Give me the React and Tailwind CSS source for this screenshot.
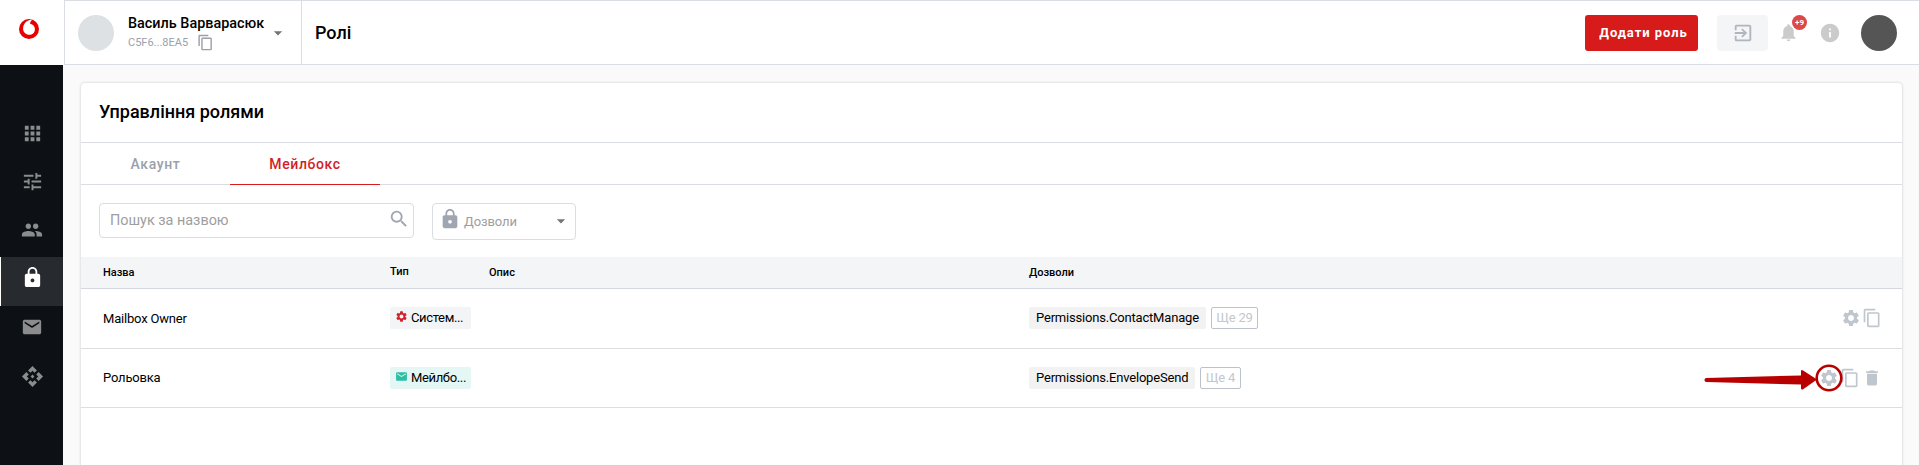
import {
  MdApps, MdTune, MdPeople, MdLock, MdEmail, MdApi, MdContentCopy, MdArrowDropDown,
  MdExitToApp, MdNotifications, MdInfo, MdSearch, MdSettings, MdDelete,
} from "react-icons/md";

const NAV = [
  { icon: MdApps, size: 23, pad: "pt-[12px]" },
  { icon: MdTune, size: 23, pad: "pt-[11px]" },
  { icon: MdPeople, size: 22, pad: "pt-[11px]" },
  { icon: MdLock, size: 23, active: true },
  { icon: MdEmail, size: 22, pad: "pt-[10px]" },
  { icon: MdApi, size: 23, pad: "pt-[10px]" },
];

const ROWS = [
  { name: "Mailbox Owner", type: "Систем...", system: true, permission: "Permissions.ContactManage", more: "Ще 29" },
  { name: "Рольовка", type: "Мейлбо...", system: false, permission: "Permissions.EnvelopeSend", more: "Ще 4" },
];

const GRID = "grid grid-cols-[287px_99px_540px_1fr] pl-[22px]";

function Logo() {
  return (
    <svg className="h-5 w-5" viewBox="0 0 20 20">
      <circle cx="10" cy="10" r="10" fill="#e60000" />
      <path fill="#fff" d="M10.1 15.8c-3 0-6-2.400-6-6.300C4.100 6.700 5.600 4.100 7.500 2.600 9.300 1.200 11.800.5 14 .5c.1 0 .2 0 .3.1-1.900.4-3.200 2.200-3.200 4v.2c3.200.8 4.800 2.700 4.800 5.600 0 2.900-2.200 5.400-5.800 5.400z" />
    </svg>
  );
}

function Sidebar() {
  return (
    <aside className="flex h-[465px] w-[63px] shrink-0 flex-col bg-[#0d1015]">
      <div className="flex h-[65px] shrink-0 justify-center bg-white pr-[5px] pt-[19px]">
        <Logo />
      </div>
      <nav className="flex flex-col pt-[45px]">
        {NAV.map(({ icon: Icon, size, active, pad }, i) => (
          <div
            key={i}
            className={
              active
                ? "flex h-[49px] justify-center border-l border-white bg-[#272a2e] pt-[9px] text-white"
                : `flex h-[49px] justify-center border-l border-transparent text-[#8b8c8d] ${pad}`
            }
          >
            <Icon size={size} />
          </div>
        ))}
      </nav>
    </aside>
  );
}

function Header() {
  return (
    <header className="ml-px flex h-[65px] shrink-0 items-center border-y border-l border-[#dadde1] bg-white">
      <div className="flex h-full w-[237px] items-center border-r border-[#dadde1] pl-[13px]">
        <div className="h-9 w-9 shrink-0 rounded-full bg-[#dde1e4]" />
        <div className="ml-[14px] flex h-full w-[137px] flex-col pt-[12px]">
          <div className="whitespace-nowrap text-[14.4px] font-medium leading-[21px] text-black">Василь Варварасюк</div>
          <div className="flex h-5 text-[11px] leading-[17px] text-[#9aa1ab]">
            C5F6...8EA5
            <MdContentCopy size={17} className="ml-[9px]" />
          </div>
        </div>
        <MdArrowDropDown size={20} className="ml-[3px] text-[#757575]" />
      </div>
      <h1 className="ml-[13px] text-[18px] font-medium text-black">Ролі</h1>
      <div className="ml-auto flex items-center">
        <button className="h-9 w-[113px] rounded-[3px] bg-[#d71a1a] pl-[4px] text-[13px] font-bold tracking-[0.95px] text-white">
          Додати роль
        </button>
        <div className="ml-[19px] flex h-9 w-[51px] items-center justify-center rounded bg-[#f3f5f7] text-[#b0b6bd]">
          <MdExitToApp size={22} />
        </div>
        <div className="relative ml-[10px] text-[#cbcbcb]">
          <MdNotifications size={21} />
          <span className="absolute -top-[7px] left-[14px] flex h-[15px] w-[15px] items-center justify-center rounded-full bg-[#df4747] text-[8px] font-bold text-white">
            +9
          </span>
        </div>
        <MdInfo size={22} className="ml-[20px] text-[#cbcbcb]" />
        <div className="ml-[20px] mr-[22px] h-9 w-9 rounded-full bg-[#555]" />
      </div>
    </header>
  );
}

function Filters() {
  return (
    <div className="flex h-[72px] items-start pl-[18px] pt-[18px]">
      <div className="flex h-[35px] w-[315px] justify-between rounded border border-[#dadde1] pl-[10px] pr-[3px]">
        <span className="text-[14.4px] leading-[33px] text-[#9e9e9e]">Пошук за назвою</span>
        <MdSearch size={22} className="mt-[4px] text-[#9fa6b2]" />
      </div>
      <div className="ml-[18px] flex h-[37px] w-[144px] rounded border border-[#dadde1] pl-[6px] pr-[4px] text-[13px] leading-9 text-[#9e9e9e]">
        <MdLock size={22} className="mt-[4px] text-[#9fa6b2]" />
        <span className="ml-[3px] tracking-[-0.1px]">Дозволи</span>
        <MdArrowDropDown size={20} className="ml-auto mt-[7px] text-[#757575]" />
      </div>
    </div>
  );
}

function RoleRow({ row }) {
  return (
    <div className={`${GRID} border-b border-[#dcdee0] pt-[18px] text-[13px] tracking-[-0.19px] text-black ${row.system ? "h-[60px]" : "h-[59px]"}`}>
      <div className={row.system ? "leading-[23px]" : "leading-[22px]"}>{row.name}</div>
      <div>
        <div className={`flex h-[22px] w-[81px] rounded-[2px] pl-[5px] leading-[22px] ${row.system ? "bg-[#f3f4f6]" : "bg-[#e4f7f4]"}`}>
          {row.system ? (
            <MdSettings size={13} className="mt-[3px] text-[#cf1f2a]" />
          ) : (
            <MdEmail size={13} className="mt-[3px] text-[#2bc0a4]" />
          )}
          <span className="ml-[3px] whitespace-nowrap tracking-[-0.35px]">{row.type}</span>
        </div>
      </div>
      <div />
      <div className="flex">
        <span className="h-[22px] rounded-[2px] bg-[#f2f2f2] px-[7px] leading-[22px]">{row.permission}</span>
        <span className="ml-[5px] h-[22px] rounded-[2px] border border-[#bcc2cb] px-[4.5px] leading-5 text-[#c3c7ce]">{row.more}</span>
        <div className="ml-auto mr-[20px] flex h-[22px] items-center text-[#bfc6ce]">
          {row.system ? (
            <MdSettings size={20} />
          ) : (
            <div className="relative">
              <MdSettings size={20} />
              <svg className="absolute -left-[116px] -top-[6px] h-8 w-[146px]" viewBox="0 0 146 32">
                <circle cx="126" cy="16" r="12.3" fill="none" stroke="#b90000" strokeWidth="2.6" />
                <path fill="#b90000" d="M3.500 15.900 98 13.500V9.500Q98 7.200 100.500 8.700L114 17.500 100.500 27Q98 28.500 98 26V22.500L3.500 20A2 2 0 0 1 3.500 15.900Z" />
              </svg>
            </div>
          )}
          <MdContentCopy size={20} className="ml-px" />
          {!row.system && <MdDelete size={20} className="ml-[2px]" />}
        </div>
      </div>
    </div>
  );
}

export default function App() {
  return (
    <div className="flex h-[465px] overflow-hidden bg-[#fafafa] font-['Roboto',sans-serif]">
      <Sidebar />
      <div className="flex min-w-0 flex-1 flex-col bg-[linear-gradient(to_right,#fff_1px,transparent_1px)] bg-[length:100%_65px] bg-no-repeat">
        <Header />
        <main className="ml-[18px] mr-[17px] mt-[18px] h-[400px] shrink-0 rounded-t bg-white shadow-[0_0_3px_rgba(0,0,0,0.2)]">
          <h2 className="h-[59px] pl-[18px] text-[18px] font-medium leading-[57px] text-black">Управління ролями</h2>
          <div className="flex h-[43px] border-b border-t border-[#dadde1] text-[14px] font-medium leading-[42px] tracking-[0.6px]">
            <div className="w-[149px] text-center text-[#9aa1ab]">Акаунт</div>
            <div className="h-[42px] w-[150px] border-b border-[#d71a1a] text-center text-[#cf1f28]">Мейлбокс</div>
          </div>
          <Filters />
          <div className={`${GRID} h-8 border-b border-[#d5d8dc] bg-[#f3f5f7] text-[11px] font-medium leading-[31px] text-black`}>
            <div>Назва</div>
            <div className="leading-[29px]">Тип</div>
            <div>Опис</div>
            <div>Дозволи</div>
          </div>
          {ROWS.map((row) => (
            <RoleRow key={row.name} row={row} />
          ))}
        </main>
      </div>
    </div>
  );
}
